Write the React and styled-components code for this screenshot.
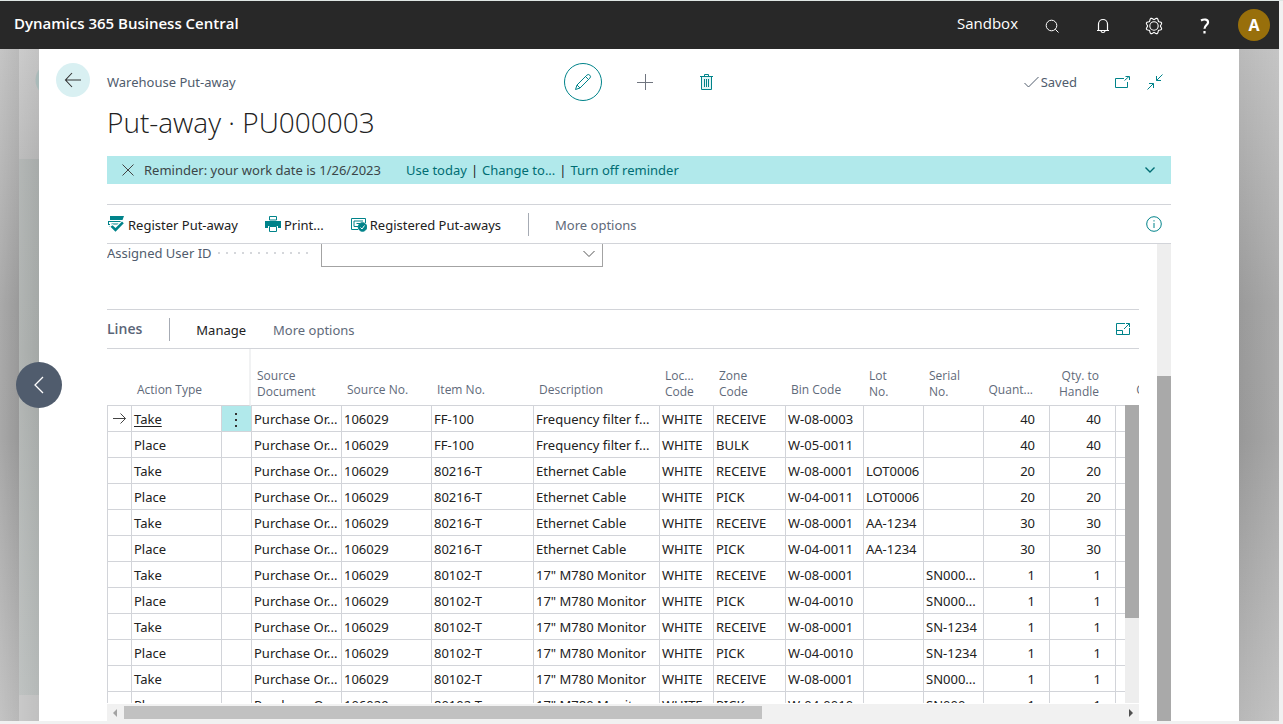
import React from 'react';
import styled, { createGlobalStyle, css } from 'styled-components';

const teal = '#00838a';
const slate = '#505c6d';
const line = '#d2d4d9';
const ink = '#212121';

const GlobalStyle = createGlobalStyle`
  * { box-sizing: border-box; }
  body {
    margin: 0;
    font-family: "Noto Sans", "Open Sans", sans-serif;
    font-size: 13px;
    line-height: 20px;
    color: ${ink};
  }
  button, select { font: inherit; color: inherit; }
`;

const Frame = styled.div`
  height: 100vh;
  display: flex;
  flex-direction: column;
  padding: 0 4px 3px 0;
  border-top: 1px solid #dfe6e4;
  background: #f1f1f1;
`;

const TopBar = styled.header`
  flex: none;
  height: 48px;
  display: flex;
  align-items: center;
  justify-content: space-between;
  padding: 0 9px 2px 14px;
  background: #282828;
  color: #fff;
`;

const Brand = styled.span`
  padding-bottom: 2px;
  font-family: "Open Sans", sans-serif;
  font-size: 15px;
  font-weight: 600;
`;

const TopTools = styled.nav`
  display: flex;
  align-items: center;
`;

const Environment = styled.span`
  margin-right: 8px;
  padding-bottom: 2px;
  font-family: "Open Sans", sans-serif;
  font-size: 15px;
`;

const PlainButton = styled.button`
  display: inline-flex;
  align-items: center;
  justify-content: center;
  padding: 0;
  border: 0;
  background: none;
  cursor: pointer;
  svg { display: block; flex: none; }
`;

const TopButton = styled(PlainButton)`
  width: 51px;
  height: 44px;
  padding-top: 4px;
`;

const Avatar = styled(PlainButton)`
  width: 32px;
  height: 32px;
  margin: 2px 0 0 8px;
  border-radius: 50%;
  background: #986f0b;
  color: #fff;
  font-size: 16px;
  font-weight: 700;
`;

const Stage = styled.div`
  position: relative;
  flex: 1;
  min-height: 0;
  display: grid;
  grid-template-columns: 19px 20px minmax(0, 1fr) 40px;
`;

const Backdrop = styled.div`
  background:
    linear-gradient(${(p) => (p.$end ? 270 : 90)}deg, rgba(255, 255, 255, 0.16), transparent),
    linear-gradient(#bababa 0%, #9a9a9a 38%, #989898 58%, #b8b8b8 100%);
`;

const PreviousCard = styled.div`
  background:
    radial-gradient(circle at 34px 31px, #a9bab9 17px, transparent 18px),
    linear-gradient(90deg, rgba(255, 255, 255, 0.14), transparent),
    linear-gradient(#c3c3c3, #b3b3b3) top / 100% 110px no-repeat,
    linear-gradient(#c0c0c0, #c0c0c0) bottom / 100% 26px no-repeat,
    linear-gradient(#a9adac, #a4a8a6 45%, #b6bab9);
`;

const Card = styled.main`
  display: grid;
  grid-template-columns: 68px minmax(0, 1fr) 68px;
  min-height: 0;
  padding-top: 14px;
  background: #fff;
`;

const BackButton = styled(PlainButton)`
  width: 34px;
  height: 34px;
  margin-left: 17px;
  border-radius: 50%;
  background: #d9f0f2;
`;

const Content = styled.div`
  display: flex;
  flex-direction: column;
  min-height: 0;
`;

const PageBar = styled.div`
  flex: none;
  display: grid;
  grid-template-columns: 1fr auto 1fr;
  align-items: center;
  height: 38px;
`;

const Crumb = styled.span`
  color: ${slate};
`;

const PageActions = styled.div`
  display: flex;
  gap: 24px;
  margin-left: 12px;
`;

const RoundButton = styled(PlainButton)`
  width: 38px;
  height: 38px;
  border-radius: 50%;
  ${(p) => p.$ring && css`border: 1px solid ${teal};`}
`;

const PageState = styled.div`
  display: flex;
  justify-content: flex-end;
  align-items: center;
  padding-right: 7px;
  color: ${slate};
`;

const Saved = styled.span`
  display: flex;
  align-items: center;
  gap: 2px;
  margin-right: 36px;
`;

const WindowButton = styled(PlainButton)`
  width: 18px;
  height: 20px;
  & + & { margin-left: 15px; }
`;

const Title = styled.h1`
  flex: none;
  height: 55px;
  margin: 0;
  font-family: "Open Sans", sans-serif;
  font-size: 28px;
  font-weight: 300;
  line-height: 42px;
  color: ${ink};
`;

const Notice = styled.div`
  flex: none;
  display: flex;
  align-items: center;
  height: 28px;
  padding: 0 14px;
  background: #b1e9eb;
`;

const NoticeText = styled.span`
  margin: 0 25px 0 9px;
  color: #3b4648;
`;

const NoticeLink = styled.a`
  color: #006d73;
  text-decoration: none;
`;

const Pipe = styled.span`
  margin: 0 4px;
`;

const NoticeToggle = styled(PlainButton)`
  width: 14px;
  height: 20px;
  margin-left: auto;
`;

const CommandBar = styled.div`
  flex: none;
  display: flex;
  align-items: center;
  height: 40px;
  border-top: 1px solid ${line};
  border-bottom: 1px solid ${line};
`;

const PageCommands = styled(CommandBar)`
  margin-top: 20px;
  padding-right: 9px;
`;

const Command = styled(PlainButton)`
  gap: 3px;
  margin-right: 27px;
  padding-top: 2px;
  color: ${(p) => (p.$muted ? '#5f6a7a' : ink)};
  svg { margin-bottom: 2px; }
`;

const EndButton = styled(PlainButton)`
  width: 16px;
  height: 20px;
  margin-left: auto;
`;

const Divider = styled.span`
  width: 1px;
  height: 23px;
  margin-right: 26px;
  background: #a6abb4;
`;

const Scroller = styled.div`
  flex: 1;
  min-height: 0;
  display: flex;
  gap: 18px;
`;

const Pane = styled.div`
  flex: 1;
  min-width: 0;
  display: flex;
  flex-direction: column;
`;

const Track = styled.div`
  flex: none;
  display: flex;
  flex-direction: column;
  width: 14px;
  background: #eee;
`;

const Space = styled.span`
  flex: ${(p) => p.$share} 0 0;
`;

const Thumb = styled.span`
  flex: ${(p) => p.$share} 0 0;
  background: #a9a9a9;
`;

const FieldRow = styled.div`
  flex: none;
  display: flex;
  align-items: flex-end;
  height: 23px;
  margin-bottom: 42px;
  overflow: hidden;
`;

const FieldLabel = styled.label`
  display: flex;
  align-items: center;
  gap: 6px;
  width: 214px;
  height: 28px;
  padding-right: 11px;
  color: ${slate};
`;

const Leader = styled.span`
  flex: 1;
  height: 2px;
  background: repeating-linear-gradient(90deg, #d5d7db 0 2px, transparent 2px 8px);
`;

const SelectBox = styled.div`
  position: relative;
  width: 282px;
  svg {
    position: absolute;
    right: 8px;
    bottom: 9px;
    pointer-events: none;
  }
`;

const Select = styled.select`
  display: block;
  width: 100%;
  height: 32px;
  border: 1px solid #a3a3a3;
  border-radius: 0;
  background: #fff;
  appearance: none;
`;

const LinesTitle = styled.h2`
  margin: 0 27px 0 0;
  font-family: "Open Sans", sans-serif;
  font-size: 14px;
  font-weight: 600;
  color: #5a6577;
`;

const LinesBar = styled(CommandBar)`
  padding-right: 8px;
`;

const GridView = styled.div`
  position: relative;
  flex: 1;
  min-height: 0;
  overflow: hidden;
`;

const Grid = styled.table`
  width: 1074px;
  table-layout: fixed;
  border-collapse: separate;
  border-spacing: 0;
`;

const Head = styled.th`
  height: 57px;
  padding: 0 ${(p) => (p.$right ? 16 : 0)}px ${(p) => (p.$single ? 7 : 5)}px ${(p) => (p.$right ? 0 : 6)}px;
  border-bottom: 1px solid ${line};
  ${(p) => p.$frozen && css`border-right: 2px solid #f1f2f3;`}
  vertical-align: bottom;
  text-align: ${(p) => (p.$right ? 'right' : 'left')};
  font-family: "Open Sans", sans-serif;
  font-size: 12px;
  font-weight: 400;
  line-height: 16px;
  color: #5f6a7a;
  overflow: hidden;
  white-space: pre;
`;

const Cell = styled.td`
  height: 26px;
  padding: 0 ${(p) => (p.$right ? 14 : 0)}px 0 ${(p) => (p.$flush ? 0 : 2)}px;
  border-left: 1px solid ${line};
  border-bottom: 1px solid ${line};
  text-align: ${(p) => (p.$right ? 'right' : 'left')};
  background: ${(p) => (p.$active ? '#b1e9eb' : '#fff')};
  overflow: hidden;
  white-space: nowrap;
`;

const RowLink = styled.a`
  color: inherit;
  text-underline-offset: 2px;
`;

const RowButton = styled(PlainButton)`
  width: 100%;
  height: 25px;
  padding-top: 2px;
  vertical-align: top;
`;

const RowMarker = styled.span`
  display: flex;
  align-items: center;
  height: 25px;
`;

const GridTrack = styled(Track)`
  position: absolute;
  top: 56px;
  right: 0;
  bottom: 0;
`;

const HorizontalTrack = styled.div`
  flex: none;
  display: flex;
  align-items: center;
  height: 18px;
  padding: 0 5px;
  gap: 7px;
  border-top: 1px solid #fff;
  background: #f1f1f1;
`;

const HorizontalThumb = styled.span`
  width: 638px;
  height: 13px;
  background: #c1c1c1;
`;

const PreviousButton = styled(PlainButton)`
  position: absolute;
  top: 50%;
  left: 39px;
  width: 46px;
  height: 46px;
  transform: translate(-50%, -50%);
  border-radius: 50%;
  background: ${slate};
`;

function Icon({ w = 16, h = 16, color = teal, stroke = 1, children }) {
  return (
    <svg width={w} height={h} viewBox={`0 0 ${w} ${h}`} fill="none" stroke={color} strokeWidth={stroke} aria-hidden="true">
      {children}
    </svg>
  );
}

const gearPoints = Array.from({ length: 64 }, (_, i) => {
  const a = ((i + 4) / 64) * Math.PI * 2;
  const r = 7.3 + 0.9 * Math.cos((i / 64) * Math.PI * 16);
  return `${(9 + r * Math.cos(a)).toFixed(2)},${(9 + r * Math.sin(a)).toFixed(2)}`;
}).join(' ');

const columns = [
  { width: 24, label: '' },
  { width: 90, label: 'Action Type' },
  { width: 30, label: '', frozen: true },
  { width: 90, label: 'Source\nDocument' },
  { width: 90, label: 'Source No.' },
  { width: 102, label: 'Item No.' },
  { width: 126, label: 'Description' },
  { width: 54, label: 'Loc...\nCode' },
  { width: 72, label: 'Zone\nCode' },
  { width: 78, label: 'Bin Code' },
  { width: 60, label: 'Lot\nNo.' },
  { width: 60, label: 'Serial\nNo.' },
  { width: 66, label: 'Quant...', right: true },
  { width: 66, label: 'Qty. to\nHandle', right: true },
  { width: 66, label: 'Code', right: true },
];

const rows = [
  ['Take', 'FF-100', 'Frequency filter f...', 'RECEIVE', 'W-08-0003', '', '', 40],
  ['Place', 'FF-100', 'Frequency filter f...', 'BULK', 'W-05-0011', '', '', 40],
  ['Take', '80216-T', 'Ethernet Cable', 'RECEIVE', 'W-08-0001', 'LOT0006', '', 20],
  ['Place', '80216-T', 'Ethernet Cable', 'PICK', 'W-04-0011', 'LOT0006', '', 20],
  ['Take', '80216-T', 'Ethernet Cable', 'RECEIVE', 'W-08-0001', 'AA-1234', '', 30],
  ['Place', '80216-T', 'Ethernet Cable', 'PICK', 'W-04-0011', 'AA-1234', '', 30],
  ['Take', '80102-T', '17" M780 Monitor', 'RECEIVE', 'W-08-0001', '', 'SN000...', 1],
  ['Place', '80102-T', '17" M780 Monitor', 'PICK', 'W-04-0010', '', 'SN000...', 1],
  ['Take', '80102-T', '17" M780 Monitor', 'RECEIVE', 'W-08-0001', '', 'SN-1234', 1],
  ['Place', '80102-T', '17" M780 Monitor', 'PICK', 'W-04-0010', '', 'SN-1234', 1],
  ['Take', '80102-T', '17" M780 Monitor', 'RECEIVE', 'W-08-0001', '', 'SN000...', 1],
  ['Place', '80102-T', '17" M780 Monitor', 'PICK', 'W-04-0010', '', 'SN000...', 1],
];

function Line({ row, current }) {
  const [action, item, description, zone, bin, lot, serial, quantity] = row;
  return (
    <tr>
      <Cell $flush>
        {current && (
          <RowMarker>
            <Icon w={22} h={13} color="#444"><path d="M5 6.500H17.500M12.500 1.500l5 5-5 5" /></Icon>
          </RowMarker>
        )}
      </Cell>
      <Cell>{current ? <RowLink href="#line">{action}</RowLink> : action}</Cell>
      <Cell $flush $active={current}>
        {current && (
          <RowButton aria-label="Show more options">
            <svg width="4" height="14" fill="#333"><path d="M0 0h2v2H0zM0 6h2v2H0zM0 12h2v2H0z" /></svg>
          </RowButton>
        )}
      </Cell>
      <Cell>Purchase Or...</Cell>
      <Cell>106029</Cell>
      <Cell>{item}</Cell>
      <Cell>{description}</Cell>
      <Cell>WHITE</Cell>
      <Cell>{zone}</Cell>
      <Cell>{bin}</Cell>
      <Cell>{lot}</Cell>
      <Cell>{serial}</Cell>
      <Cell $right>{quantity}</Cell>
      <Cell $right>{quantity}</Cell>
      <Cell />
    </tr>
  );
}

export default function App() {
  return (
    <Frame>
      <GlobalStyle />
      <TopBar>
        <Brand>Dynamics 365 Business Central</Brand>
        <TopTools>
          <Environment>Sandbox</Environment>
          <TopButton aria-label="Search">
            <Icon color="#fff"><circle cx="7.500" cy="7.500" r="5.300" /><path d="M11.300 11.300l3.200 3.200" /></Icon>
          </TopButton>
          <TopButton aria-label="Notifications">
            <Icon color="#fff" stroke={1.2}><path d="M2 12.500h12M3.500 12.500V6a4.500 4.500 0 0 1 9 0v6.500M6 13c.3 2 3.700 2 4 0" /></Icon>
          </TopButton>
          <TopButton aria-label="Settings">
            <Icon w={18} h={18} color="#fff" stroke={1.1}><polygon points={gearPoints} /><circle cx="9" cy="9" r="4.200" /></Icon>
          </TopButton>
          <TopButton aria-label="Help">
            <Icon color="#fff" stroke={2.2}><path d="M4 2.500C7 .8 11.300 1.200 11 4.700 10.800 7 7.500 7.400 7.500 10.800" /><path d="M7.500 13v2.500" /></Icon>
          </TopButton>
          <Avatar aria-label="Account">A</Avatar>
        </TopTools>
      </TopBar>

      <Stage>
        <Backdrop />
        <PreviousCard />
        <Card>
          <BackButton aria-label="Back">
            <Icon w={18} h={16} color="#333" stroke={1.1}><path d="M17 8H1.500M8 1L1.500 8 8 15" /></Icon>
          </BackButton>
          <Content>
            <PageBar>
              <Crumb>Warehouse Put-away</Crumb>
              <PageActions>
                <RoundButton $ring aria-label="Edit">
                  <Icon w={18} h={18}><path d="M1.500 16.500L3 12 12.800 2.200a2 2 0 0 1 3 3L6 15zM3 12l3 3M11.500 3.500l3 3" /></Icon>
                </RoundButton>
                <RoundButton aria-label="New">
                  <Icon color="#70757f"><path d="M0 8.500H16M8.500 0V16" /></Icon>
                </RoundButton>
                <RoundButton aria-label="Delete">
                  <Icon w={14} h={16}><path d="M1.500 3v12.500h10V3" fill="#e3f4f5" /><path d="M0 2.500H13M4.500 2V.5h4V2M4.500 5v8M6.500 5v8M8.500 5v8" /></Icon>
                </RoundButton>
              </PageActions>
              <PageState>
                <Saved>
                  <Icon w={15} h={12} color={slate}><path d="M.5 7l4 4L14.500 1" /></Icon>
                  Saved
                </Saved>
                <WindowButton aria-label="Open in new window">
                  <Icon><path d="M10 4.500H1.500v9h12V8M10.500 6.500L15 2.500M11.500 2.500H15.500V6" /></Icon>
                </WindowButton>
                <WindowButton aria-label="Collapse">
                  <Icon><path d="M15.500.5L9.500 6.500M9.500 2v4.500H14M.5 15.500L6.500 9.500M2 9.500h4.500V14" /></Icon>
                </WindowButton>
              </PageState>
            </PageBar>
            <Title>Put-away · PU000003</Title>

            <Notice>
              <PlainButton aria-label="Dismiss">
                <Icon w={14} h={12} color="#444"><path d="M1.500.5l11 11M12.500.5l-11 11" /></Icon>
              </PlainButton>
              <NoticeText>Reminder: your work date is 1/26/2023</NoticeText>
              <NoticeLink href="#today">Use today</NoticeLink>
              <Pipe>|</Pipe>
              <NoticeLink href="#change">Change to...</NoticeLink>
              <Pipe>|</Pipe>
              <NoticeLink href="#off">Turn off reminder</NoticeLink>
              <NoticeToggle aria-label="Show more">
                <Icon w={10} h={6} color="#006d73" stroke={1.4}><path d="M.5.5L5 5 9.500.5" /></Icon>
              </NoticeToggle>
            </Notice>

            <PageCommands>
              <Command>
                <Icon w={18} h={16} color="none">
                  <path fill={teal} d="M3 0H17L15.500 4H3zM1 5h14v1H2v2h1v1H1zM4.500 7.500h7v1h-7zM2 10h3v1H2z" />
                  <path fill="#fff" d="M2 10.500L5.500 8l3 2.500L14.500 4.500 18 7l-9.500 9z" />
                  <path fill={teal} d="M3.500 10.800L5.500 9.300l3 2.700L15 5.500l1.800 1.800L8.500 15.800z" />
                </Icon>
                Register Put-away
              </Command>
              <Command>
                <Icon w={16} h={16} color="none">
                  <path fill={teal} d="M0 5h16v7h-3v-2H3v2H0z" />
                  <path fill="#fff" stroke={teal} d="M4.500.5h7v3.500h-7zM4.500 10.500h7v5h-7z" />
                </Icon>
                Print...
              </Command>
              <Command>
                <Icon w={16} h={16}>
                  <path d="M7 13.500H.5V2.500h14V7M3 5h9M7 10.500H3V5M5.500 7.500H9" />
                  <circle cx="11.500" cy="11" r="4.300" fill={teal} />
                  <path stroke="#fff" d="M9.500 11.500l1.500 1.500 2.500-3.500" />
                </Icon>
                Registered Put-aways
              </Command>
              <Divider />
              <Command $muted>More options</Command>
              <EndButton aria-label="Show details">
                <Icon><circle cx="8" cy="8" r="7.300" /><path d="M8 7v5M8 4.200v1.300" /></Icon>
              </EndButton>
            </PageCommands>

            <Scroller>
              <Pane>
                <FieldRow>
                  <FieldLabel htmlFor="assigned-user">Assigned User ID<Leader /></FieldLabel>
                  <SelectBox>
                    <Select id="assigned-user" defaultValue=""><option value="" /></Select>
                    <Icon w={12} h={8} color="#555"><path d="M.5 1L6 6.500 11.500 1" /></Icon>
                  </SelectBox>
                </FieldRow>

                <LinesBar>
                  <LinesTitle>Lines</LinesTitle>
                  <Divider />
                  <Command>Manage</Command>
                  <Command $muted>More options</Command>
                  <EndButton aria-label="Focus lines">
                    <Icon><path d="M10 2.500H1.500v11h13V7M1.500 9.500h6v4M9 8l5.500-5.500M11 2.500h3.500V6" /></Icon>
                  </EndButton>
                </LinesBar>

                <GridView>
                  <Grid>
                    <colgroup>
                      {columns.map((c, i) => <col key={i} width={c.width} />)}
                    </colgroup>
                    <thead>
                      <tr>
                        {columns.map((c, i) => (
                          <Head key={i} scope="col" $right={c.right} $frozen={c.frozen} $single={!c.label.includes('\n')}>
                            {c.label}
                          </Head>
                        ))}
                      </tr>
                    </thead>
                    <tbody>
                      {rows.map((row, i) => <Line key={i} row={row} current={i === 0} />)}
                    </tbody>
                  </Grid>
                  <GridTrack>
                    <Thumb $share={213} />
                    <Space $share={85} />
                  </GridTrack>
                </GridView>
                <HorizontalTrack>
                  <svg width="5" height="8" fill="#a3a3a3"><path d="M5 0v8L1 4z" /></svg>
                  <HorizontalThumb />
                  <Space $share={1} />
                  <svg width="5" height="8" fill="#505050"><path d="M0 0v8l4-4z" /></svg>
                </HorizontalTrack>
              </Pane>
              <Track>
                <Space $share={132} />
                <Thumb $share={345} />
              </Track>
            </Scroller>
          </Content>
        </Card>
        <Backdrop $end />
        <PreviousButton aria-label="Previous record">
          <Icon w={12} h={18} color="#fff" stroke={1.3}><path d="M10 1L2 9l8 8" /></Icon>
        </PreviousButton>
      </Stage>
    </Frame>
  );
}
